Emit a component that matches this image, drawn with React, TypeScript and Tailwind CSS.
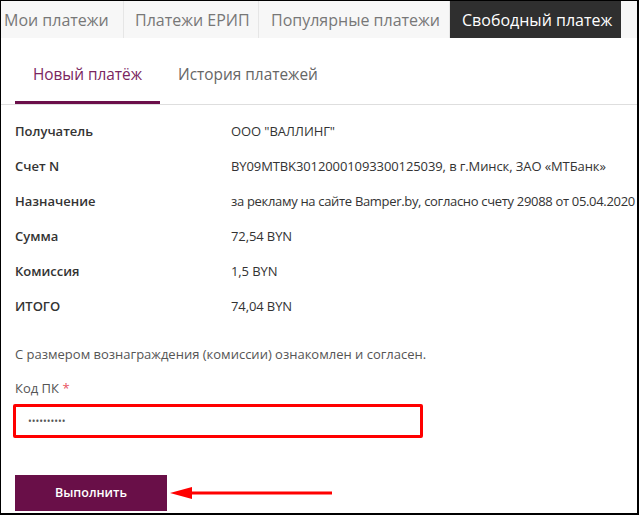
import React from 'react'

const tabs = [
  { label: 'Мои платежи', w: 'w-[123px]', pl: 'pl-[3px]' },
  { label: 'Платежи ЕРИП', w: 'w-[135px]', pl: 'pl-[11px]' },
  { label: 'Популярные платежи', w: 'w-[191px]', pl: 'pl-[12px]' },
]

const rows = [
  { k: 'Получатель', v: 'ООО "ВАЛЛИНГ"', t: 'tracking-[-0.1px]' },
  { k: 'Счет N', v: 'BY09MTBK30120001093300125039, в г.Минск, ЗАО «МТБанк»', t: 'tracking-[-0.1px]' },
  { k: 'Назначение', v: 'за рекламу на сайте Bamper.by, согласно счету 29088 от 05.04.2020', t: 'tracking-[-0.32px]' },
  { k: 'Сумма', v: '72,54 BYN', t: 'tracking-[-0.1px]' },
  { k: 'Комиссия', v: '1,5 BYN', t: 'tracking-[-0.1px]' },
  { k: 'ИТОГО', v: '74,04 BYN', t: 'tracking-[-0.1px]' },
]

export default function App() {
  return (
    <div
      className="w-[639px] h-[515px] overflow-hidden bg-white border-t border-l border-r-2 border-b-2 border-black flex flex-col"
      style={{ fontFamily: '"Open Sans", "Noto Sans", sans-serif' }}
    >
      {/* Top tabs */}
      <div className="flex h-[37px] bg-[#f7f7f7] text-[16px] text-[#777] shrink-0">
        {tabs.map((t) => (
          <div
            key={t.label}
            className={`${t.w} ${t.pl} flex items-center border-r border-[#e6e6e6] whitespace-nowrap shrink-0`}
          >
            {t.label}
          </div>
        ))}
        <div className="w-[171px] shrink-0 flex items-center pl-[12px] bg-[#2f2f2f] text-white whitespace-nowrap">
          Свободный платеж
        </div>
        <div className="flex-1" />
      </div>

      {/* Sub tabs */}
      <div className="flex h-[67px] border-b border-[#dedede] text-[15.4px] shrink-0 pl-[14px]">
        <div className="w-[145px] flex items-center justify-center text-[#7a2660] border-b-[3px] border-[#6b0f4a] pt-[11px]">
          Новый платёж
        </div>
        <div className="flex items-center pl-[18px] text-[#666] pt-[11px] pb-[3px]">История платежей</div>
      </div>

      {/* Details */}
      <div className="pl-[14px] pt-[9px] text-[13px] text-[#333]">
        {rows.map((r) => (
          <div key={r.k} className="flex items-center h-[35px]">
            <div className="w-[216px] shrink-0 font-semibold">{r.k}</div>
            <div className={`whitespace-nowrap ${r.t}`}>{r.v}</div>
          </div>
        ))}

        <div className="mt-[20px] h-[20px] leading-[20px] text-[#555]">
          С размером вознаграждения (комиссии) ознакомлен и согласен.
        </div>

        <div className="mt-[14px] h-[20px] leading-[20px] text-[#555]">
          Код ПК <span className="text-[#e8525e]">*</span>
        </div>

        <div className="mt-[6px] -ml-[2px] w-[410px] h-[34px] border-[3px] border-[#ff0000] rounded-[2px] flex items-center pl-[12px]">
          <span className="text-[10px] text-[#555] leading-none">••••••••••</span>
        </div>

        <div className="mt-[37px] flex items-center">
          <button className="w-[152px] h-[36px] bg-[#690f48] text-white text-[12.5px] font-semibold">
            Выполнить
          </button>
          <svg width="165" height="14" viewBox="0 0 165 14" className="ml-[3px]">
            <line x1="14" y1="7" x2="162" y2="7" stroke="#ff0000" strokeWidth="3" />
            <polygon points="0,7 22,1 22,13" fill="#ff0000" />
          </svg>
        </div>
      </div>
    </div>
  )
}
